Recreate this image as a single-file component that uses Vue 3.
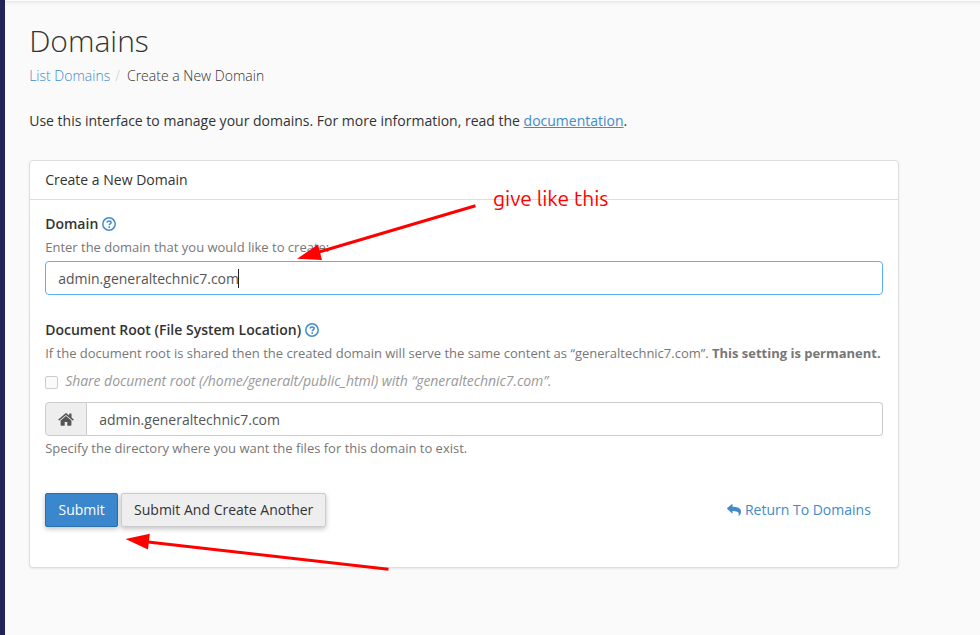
<script setup>
const domain = 'admin.generaltechnic7.com'
const site = 'generaltechnic7.com'
</script>

<template>
  <div class="page">
    <aside class="rail"></aside>
    <main class="content">
      <h1>Domains</h1>
      <nav class="crumbs">
        <a>List Domains</a><span class="slash">/</span><span>Create a New Domain</span>
      </nav>
      <p class="intro">Use this interface to manage your domains. For more information, read the <a>documentation</a>.</p>

      <section class="panel">
        <header class="panel-head">Create a New Domain</header>
        <div class="panel-body">
          <div class="label">
            <span>Domain</span>
            <svg class="help-icon" viewBox="0 0 14 14"><circle cx="7" cy="7" r="6.2" /><path d="M4.900 5.500C5.200 4.400 5.900 3.900 7 3.900C8.300 3.900 9.100 4.600 9.100 5.500C9.100 6.800 7.200 6.800 7.200 8.300M7.200 9.300V10.900" /></svg>
          </div>
          <div class="hint">Enter the domain that you would like to create:</div>
          <div class="field focused" role="textbox">{{ domain }}<i class="caret"></i></div>

          <div class="label second">
            <span>Document Root (File System Location)</span>
            <svg class="help-icon" viewBox="0 0 14 14"><circle cx="7" cy="7" r="6.2" /><path d="M4.900 5.500C5.200 4.400 5.900 3.900 7 3.900C8.300 3.900 9.100 4.600 9.100 5.500C9.100 6.800 7.200 6.800 7.200 8.300M7.200 9.300V10.900" /></svg>
          </div>
          <div class="hint root">If the document root is shared then the created domain will serve the same content as “{{ site }}”. <b>This setting is permanent.</b></div>
          <div class="share"><i class="check"></i><em>Share document root (/home/generalt/public_html) with “{{ site }}”.</em></div>
          <div class="group">
            <span class="addon">
              <svg class="home" viewBox="0 0 16 13"><path d="M8 2.900 2.600 7.400V12.100c0 .4.300.700.700.700h3.400V9.100h2.600v3.700h3.400c.4 0 .7-.3.7-.7V7.400z" /><path d="M15.700 6.400 13.500 4.500V.9c0-.2-.1-.3-.3-.3h-1.700c-.2 0-.3.1-.3.3v1.700L9 .7c-.6-.5-1.400-.5-2 0L.3 6.400c-.2.1-.2.3 0 .4l.5.6c.1.200.3.200.5.100L8 2l6.700 5.500c.2.100.4.100.5-.1l.5-.6c.2-.1.200-.3 0-.4z" /></svg>
            </span>
            <div class="field" role="textbox">{{ domain }}</div>
          </div>
          <div class="hint after">Specify the directory where you want the files for this domain to exist.</div>

          <div class="actions">
            <button class="btn primary">Submit</button>
            <button class="btn another">Submit And Create Another</button>
            <a class="return">
              <svg viewBox="0 0 14 12"><path d="M.2 3.900 4.800.2c.3-.3.700-.1.700.3v2.200c4.900.1 8.500 1 8.500 5.200 0 1.500-.8 3-2 3.900-.3.200-.6 0-.5-.4C12.600 8.200 10.500 7 5.500 7v2c0 .4-.4.600-.7.300L.2 4.800c-.3-.3-.3-.6 0-.9z" /></svg>
              Return To Domains
            </a>
          </div>
        </div>
      </section>
    </main>

    <svg class="notes" viewBox="0 0 980 635">
      <path class="shaft" d="M475.500 205.700 319 252M388.500 569.300 148 542" />
      <path class="tip" d="M297 258.800 318 244.500 322 260zM125.500 539 149.800 533.700 148 549.500z" />
    </svg>
    <span class="note">give like this</span>
  </div>
</template>

<style>
body { background: #fafafa; }
</style>

<style scoped>
* { box-sizing: border-box; }
.page {
  position: relative;
  display: flex;
  width: 980px;
  height: 635px;
  overflow: hidden;
  background: #fafafa;
  color: #333;
  font: 14px/20px "Open Sans", sans-serif;
}
.rail { width: 5px; background: #202555; z-index: 1; }
.content {
  flex: 1;
  padding: 22px 81px 0 24.2px;
  background: linear-gradient(#fafafa 0 1px, #e7e7e7 1px, #f3f3f3 3px, #fafafa 6px);
}
a { color: #428bca; }
h1 { margin: 0; font-size: 30px; line-height: 38px; font-weight: 300; }
.crumbs { display: flex; margin-top: 6px; font-weight: 300; }
.slash { padding: 0 7px 0 5px; color: #ccc; }
.intro { margin: 25px 0 0; }
.intro a { text-decoration: underline; }
.panel {
  height: 408px;
  margin-top: 29px;
  background: #fff;
  border: 1px solid #ddd;
  border-radius: 4px;
  box-shadow: 0 1px 2px rgba(0, 0, 0, .08);
}
.panel-head { height: 39px; padding: 9px 15px; border-bottom: 1px solid #ddd; }
.panel-body { padding: 14px 15px; }
.label { display: flex; align-items: center; gap: 4px; height: 20px; font-weight: 600; }
.help-icon { width: 14px; height: 14px; fill: none; stroke: #428bca; stroke-width: 1.5; }
.hint { height: 20px; margin-top: 3px; color: #777; font-size: 13px; white-space: nowrap; }
.hint.root { letter-spacing: -.01px; }
.field {
  display: flex;
  align-items: center;
  height: 34px;
  padding: 1px 12px 0;
  border: 1px solid #ccc;
  border-radius: 4px;
  background: #fff;
  color: #555;
}
.focused { margin-top: 4px; border-color: #5eaff5; }
.caret { width: 1px; height: 19px; margin-left: -1px; background: #222; }
.second { margin-top: 25px; }
.share { display: flex; align-items: center; height: 20px; margin-top: 8px; color: #999; white-space: nowrap; letter-spacing: -.04px; }
.check { width: 13px; height: 13px; margin: 3px 7px 0 0; border: 1px solid #ccc; border-radius: 2px; background: #fafafa; }
.group { display: flex; margin-top: 11px; }
.group .field { flex: 1; border-left: 0; border-radius: 0 4px 4px 0; }
.addon {
  display: grid;
  place-items: center;
  width: 42px;
  border: 1px solid #ccc;
  border-radius: 4px 0 0 4px;
  background: #eee;
}
.home { width: 16px; height: 13px; fill: #555; }
.hint.after { margin-top: 2px; }
.actions { display: flex; align-items: center; gap: 3px; margin-top: 35px; }
.btn {
  height: 34px;
  padding: 0 12px;
  border: 1px solid #ccc;
  border-radius: 2px;
  background: #eee;
  color: #333;
  font: inherit;
  white-space: nowrap;
  box-shadow: 0 2px 5px rgba(0, 0, 0, .24);
}
.primary { width: 73px; border-color: #2a6fae; background: #3a87cd; color: #fff; }
.another { width: 205px; padding: 0; }
.return { display: flex; align-items: center; gap: 4px; margin: 0 12.200px 0 auto; }
.return svg { width: 14px; height: 12px; fill: #428bca; }
.notes { position: absolute; inset: 0; width: 980px; height: 635px; }
.shaft { fill: none; stroke: #f00; stroke-width: 3; }
.tip { fill: #f00; }
.note {
  position: absolute;
  left: 493px;
  top: 185px;
  color: #f00;
  font: 400 21px/26px Ubuntu, "Noto Sans", sans-serif;
  white-space: nowrap;
}
</style>
